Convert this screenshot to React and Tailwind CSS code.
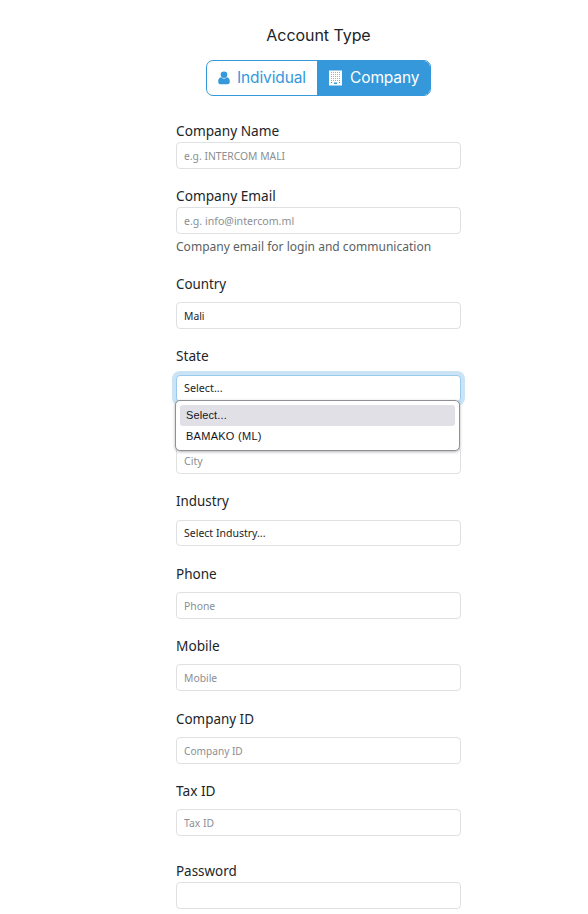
import React from "react";

function Field({ label, placeholder, value, className = "mt-[16px]", gap = "mt-[7px]", height = "h-[27px]", focused = false, labelScale = "scale-x-[0.91]", textScale = "scale-x-[0.94]", children }) {
  return (
    <div className={className}>
      {label && (
        <div className="h-[22px] whitespace-nowrap text-[15px] leading-[20px] text-[#212529]">
          <span className={`inline-block origin-left ${labelScale}`}>{label}</span>
        </div>
      )}
      <div
        className={`relative flex items-center rounded-[4px] border bg-white px-[7px] text-[11px] leading-[16px] ${gap} ${height} ${
          focused ? "border-[#9acbed] shadow-[0_0_0_4px_#cae4f6]" : "border-[#dee0e2]"
        } ${value ? "text-[#212529]" : "text-[#8b8f93]"}`}
      >
        <span className={`inline-block origin-left whitespace-nowrap ${focused ? "pb-[2px]" : ""} ${textScale}`}>{value || placeholder}</span>
        {children}
      </div>
    </div>
  );
}

function StateMenu() {
  return (
    <div className="absolute -left-[2px] top-[24px] z-10 h-[51px] w-[285px] rounded-[5px] border border-[#8f8f96] bg-white px-[4px] pt-[4px] font-['Liberation_Sans',sans-serif] text-[11px] text-[#15141a] shadow-[0_1px_3px_rgba(0,0,0,0.3)]">
      <div className="h-[21px] rounded-[3px] bg-[#e0e0e6] px-[6px] leading-[21px] tracking-[0.12px]">Select...</div>
      <div className="h-[21px] px-[6px] leading-[21px] tracking-[0.27px]">BAMAKO (ML)</div>
    </div>
  );
}

export default function App() {
  return (
    <main className="h-[914px] w-[588px] overflow-hidden bg-white font-['Noto_Sans',sans-serif]">
      <div className="ml-[176px] w-[285px]">
        <h1 className="pt-[23px] text-center font-['Inter',sans-serif] text-[16px] leading-[24px] tracking-[-0.06px] text-[#212529]">Account Type</h1>
        <div className="ml-[30px] mt-[13px] flex h-[36px] w-[225px] overflow-hidden rounded-[7px] border border-[#3498db] font-['Inter',sans-serif] text-[15.5px] leading-[34px]">
          <div className="flex w-[110px] items-center pl-[11px] text-[#3498db]">
            <svg width="12" height="14" viewBox="0 0 12 14" fill="currentColor">
              <circle cx="6" cy="3.7" r="3.3" />
              <path d="M3 6.3C1 6.8.2 8.3.2 10.8c0 1.6.8 2.5 2.2 2.5h7.2c1.4 0 2.2-.9 2.2-2.5 0-2.5-.8-4-2.8-4.5a4.3 4.3 0 0 1-6 0Z" />
            </svg>
            <span className="-mt-[1px] ml-[7px] tracking-[-0.12px]">Individual</span>
          </div>
          <div className="flex flex-1 items-center bg-[#3498db] pl-[12px] text-white">
            <svg width="13" height="16" viewBox="0 0 13 16">
              <path d="M0 .5h13v15H0z" fill="#fff" />
              <path d="M2.5 2v9M4.5 2v9M6.5 2v9M8.5 2v9M10.5 2v9" stroke="#3498db" strokeWidth="1" strokeDasharray="1 1" opacity=".65" />
              <path d="M5 12.5h3V14H5zM2 12h1v1H2zM10 12h1v1h-1z" fill="#3498db" />
            </svg>
            <span className="-mt-[1px] ml-[8px] tracking-[-0.12px]">Company</span>
          </div>
        </div>
        <Field className="mt-[24px]" gap="mt-0" label="Company Name" placeholder="e.g. INTERCOM MALI" />
        <Field gap="mt-0" label="Company Email" placeholder="e.g. info@intercom.ml" textScale="scale-x-[0.965]" />
        <p className="h-[24px] whitespace-nowrap text-[13px] leading-[24px] text-[#5a5f64]">
          <span className="inline-block origin-left scale-x-[0.926]">Company email for login and communication</span>
        </p>
        <Field className="mt-[15px]" label="Country" value="Mali" labelScale="scale-x-[0.89]" />
        <Field label="State" gap="mt-[8px]" value="Select..." textScale="scale-x-[0.98]" focused>
          <StateMenu />
        </Field>
        <Field className="mt-[45px]" gap="mt-0" placeholder="City" textScale="scale-x-[0.96]" />
        <Field label="Industry" gap="mt-[8px]" height="h-[26px]" value="Select Industry..." textScale="scale-x-[0.955]" labelScale="scale-x-[0.89]" />
        <Field className="mt-[17px]" label="Phone" placeholder="Phone" labelScale="scale-x-[0.9]" />
        <Field label="Mobile" placeholder="Mobile" />
        <Field className="mt-[17px]" label="Company ID" placeholder="Company ID" labelScale="scale-x-[0.895]" textScale="scale-x-[0.92]" />
        <Field label="Tax ID" placeholder="Tax ID" />
        <Field className="mt-[24px]" gap="mt-0" label="Password" placeholder="" labelScale="scale-x-[0.895]" />
      </div>
    </main>
  );
}
